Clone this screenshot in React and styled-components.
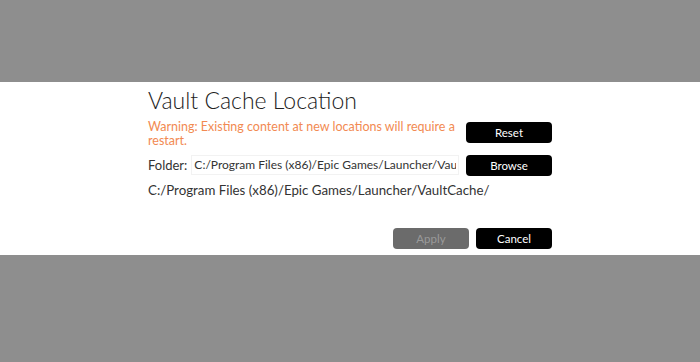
import React from "react";
import styled, { createGlobalStyle } from "styled-components";

const Global = createGlobalStyle`
  html, body {
    margin: 0;
    padding: 0;
    background: #8e8e8e;
    font-family: Lato, "Liberation Sans", sans-serif;
  }
`;

const App = () => {
  return (
    <>
      <Global />
      <Page>
        <Panel>
          <Content>
            <Title>Vault Cache Location</Title>
            <Row>
              <Warning>
                Warning: Existing content at new locations will require a
                restart.
              </Warning>
              <Button>Reset</Button>
            </Row>
            <Row center>
              <Folder>
                <Label>Folder:</Label>
                <PathInput
                  readOnly
                  value="C:/Program Files (x86)/Epic Games/Launcher/VaultCache/"
                />
              </Folder>
              <Button>Browse</Button>
            </Row>
            <FullPath>C:/Program Files (x86)/Epic Games/Launcher/VaultCache/</FullPath>
            <Footer>
              <Button disabled>Apply</Button>
              <Button>Cancel</Button>
            </Footer>
          </Content>
        </Panel>
      </Page>
    </>
  );
};

export default App;

const Page = styled.div`
  height: 362px;
  padding-top: 82px;
  box-sizing: border-box;
`;
const Panel = styled.div`
  background: #fff;
  height: 173px;
`;
const Content = styled.div`
  width: 404px;
  margin: 0 auto;
  padding-top: 4px;
  display: flex;
  flex-direction: column;
`;
const Title = styled.h1`
  margin: 0;
  font-size: 23px;
  font-weight: 300;
  color: #222;
  line-height: 28px;
  height: 34px;
`;
const Row = styled.div`
  display: flex;
  align-items: ${(p) => (p.center ? "center" : "flex-start")};
  justify-content: space-between;
  gap: 7px;
  margin-top: ${(p) => (p.center ? "5px" : "0")};
`;
const Warning = styled.div`
  flex: 1;
  color: #f28a52;
  font-size: 12.5px;
  line-height: 14px;
`;
const Button = styled.button`
  width: 86px;
  height: 21px;
  flex-shrink: 0;
  border: none;
  border-radius: 4px;
  background: ${(p) => (p.disabled ? "#6b6b6b" : "#000")};
  color: ${(p) => (p.disabled ? "#9a9a9a" : "#fff")};
  font-family: inherit;
  font-size: 11.5px;
  padding: 0;
  margin-top: 2px;
`;
const Folder = styled.div`
  flex: 1;
  display: flex;
  align-items: center;
  gap: 4px;
`;
const Label = styled.span`
  font-size: 13px;
  color: #333;
`;
const PathInput = styled.input`
  flex: 1;
  min-width: 0;
  height: 20px;
  box-sizing: border-box;
  border: 1px solid #f2f2f2;
  padding: 0 2px;
  font-family: inherit;
  font-size: 12px;
  color: #333;
  outline: none;
`;
const FullPath = styled.div`
  font-size: 13.3px;
  color: #333;
  margin-top: 6px;
`;
const Footer = styled.div`
  display: flex;
  justify-content: flex-end;
  gap: 7px;
  margin-top: 28px;
  button {
    width: 76px;
  }
`;
